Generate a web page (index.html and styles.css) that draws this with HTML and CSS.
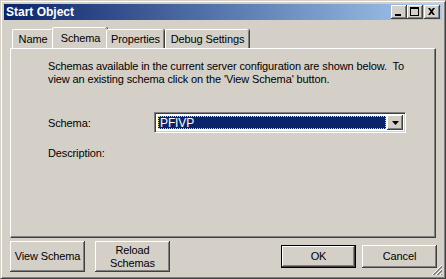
FILE: index.html
```html
<!DOCTYPE html>
<html>
<head>
<meta charset="utf-8">
<link rel="stylesheet" href="styles.css">
</head>
<body>
<div class="window">
  <div class="titlebar">
    <span class="title">Start Object</span>
    <div class="tbtns">
      <span class="tbtn"><svg width="16" height="14" viewBox="0 0 16 14"><rect x="4" y="9" width="6" height="2" fill="#000"/></svg></span>
      <span class="tbtn"><svg width="16" height="14" viewBox="0 0 16 14"><rect x="3.5" y="2.5" width="8" height="8" fill="none" stroke="#000"/><rect x="3" y="2" width="9" height="2" fill="#000"/></svg></span>
      <span class="tbtn close"><svg width="16" height="14" viewBox="0 0 16 14"><path d="M4 3h2l1.5 2 1.5-2h2l-2.5 3.5 2.5 3.5h-2l-1.5-2-1.5 2h-2l2.5-3.5z" fill="#000"/></svg></span>
    </div>
  </div>
  <div class="client">
    <div class="tabs">
      <span class="tab">Name</span>
      <span class="tab active">Schema</span>
      <span class="tab">Properties</span>
      <span class="tab">Debug Settings</span>
    </div>
    <div class="panel">
      <p class="intro">Schemas available in the current server configuration are shown below.&nbsp; To<br>view an existing schema click on the 'View Schema' button.</p>
      <div class="row">
        <span class="label">Schema:</span>
        <div class="combo">
          <div class="combo-field"><span class="sel">PFIVP</span></div>
          <span class="combo-btn"><svg width="7" height="4" viewBox="0 0 7 4"><path d="M0 0h7L3.5 4z" fill="#000"/></svg></span>
        </div>
      </div>
      <div class="row desc"><span class="label">Description:</span></div>
    </div>
    <div class="footer">
      <div class="group">
        <span class="btn tall">View Schema</span>
        <span class="btn tall">Reload<br>Schemas</span>
      </div>
      <div class="group right">
        <span class="btn default">OK</span>
        <span class="btn">Cancel</span>
      </div>
    </div>
  </div>
  <svg class="grip" width="12" height="12" viewBox="0 0 12 12">
    <path d="M11 1L1 11M11 5L5 11M11 9L9 11" stroke="#fff" stroke-width="1"/>
    <path d="M11 2L2 11M11 3L3 11M11 6L6 11M11 7L7 11M11 10L10 11" stroke="#808080" stroke-width="1"/>
  </svg>
</div>
</body>
</html>
```
FILE: styles.css
```css
* { box-sizing: border-box; }
html, body { margin: 0; padding: 0; background: #d4d0c8; }
body { font-family: "Liberation Sans", Arial, sans-serif; font-size: 11px; letter-spacing: -0.12px; color: #000; }

.window {
  position: relative;
  width: 446px;
  height: 279px;
  background: #d4d0c8;
  border: 1px solid;
  border-color: #d4d0c8 #404040 #404040 #d4d0c8;
  box-shadow: inset 1px 1px #fff, inset -1px -1px #808080;
  padding: 3px;
  display: flex;
  flex-direction: column;
}

.titlebar {
  height: 18px;
  background: linear-gradient(to right, #0a246a, #a6caf0);
  display: flex;
  align-items: center;
  justify-content: space-between;
  padding: 0 2px 0 2px;
}
.title { color: #fff; font-weight: bold; font-size: 12px; letter-spacing: 0; }
.tbtns { display: flex; gap: 0; }
.tbtn {
  width: 16px; height: 14px;
  background: #d4d0c8;
  box-shadow: inset -1px -1px #404040, inset 1px 1px #fff, inset -2px -2px #808080;
  display: block;
}
.tbtn svg { display: block; }
.tbtn.close { margin-left: 1px; }

.client { flex: 1; display: flex; flex-direction: column; padding: 7px 4px 0 6px; }

.tabs { display: flex; align-items: flex-end; height: 21px; padding-left: 2px; position: relative; z-index: 1; }
.tab {
  height: 19px;
  padding: 2px 2px 0 2px;
  border-left: 1px solid #fff;
  border-top: 1px solid #fff;
  border-radius: 2px 2px 0 0;
  box-shadow: inset -1px 0 #808080, 1px 0 #404040;
  background: #d4d0c8;
  margin-right: 1px;
  line-height: 15px;
  text-align: center;
  white-space: nowrap;
}
.tab.active {
  height: 21px;
  margin: 0 -1px 0 -2px;
  padding: 3px 2px 0 3px;
}
.tab:first-child { width: 41px; }
.tab.active { width: 55px; }
.tab:nth-child(3) { width: 58px; }
.tab:nth-child(4) { width: 84px; }

.panel {
  height: 190px;
  margin-right: 2px;
  border-top: 1px solid #fff;
  border-left: 1px solid #fff;
  border-right: 1px solid #404040;
  border-bottom: 1px solid #404040;
  box-shadow: inset -1px -1px #808080;
  padding: 11px 0 0 37px;
}
.intro { margin: 0; line-height: 13px; }

.row { display: flex; align-items: center; margin-top: 26px; }
.label { width: 106px; }
.desc { margin-top: 14px; }

.combo {
  width: 252px; height: 21px;
  background: #fff;
  border-top: 1px solid #808080; border-left: 1px solid #808080;
  border-right: 1px solid #fff; border-bottom: 1px solid #fff;
  box-shadow: inset 1px 1px #404040, inset -1px -1px #d4d0c8;
  padding: 2px;
  display: flex;
}
.combo-field { flex: 1; padding: 1px; }
.sel {
  display: block; height: 100%;
  background: #0a246a; color: #fff;
  outline: 1px dotted #e8d878; outline-offset: -1px;
  padding: 1px 0 0 2px;
  font-size: 12px; line-height: 13px;
}
.combo-btn {
  width: 16px; height: 15px;
  background: #d4d0c8;
  box-shadow: inset -1px -1px #404040, inset 1px 1px #fff, inset -2px -2px #808080;
  display: flex; align-items: center; justify-content: center;
}
.combo-btn svg { display: block; }

.footer { display: flex; justify-content: space-between; align-items: center; height: 37px; padding-right: 1px; }
.group { display: flex; gap: 10px; align-items: center; }
.group.right { gap: 6px; }
.btn {
  width: 75px; height: 23px;
  background: #d4d0c8;
  box-shadow: inset -1px -1px #404040, inset 1px 1px #fff, inset -2px -2px #808080;
  display: flex; align-items: center; justify-content: center; text-align: center;
  line-height: 13px;
}
.btn.tall { height: 31px; }
.btn.default { border: 1px solid #000; }
.grip { position: absolute; right: 2px; bottom: 2px; }
```
